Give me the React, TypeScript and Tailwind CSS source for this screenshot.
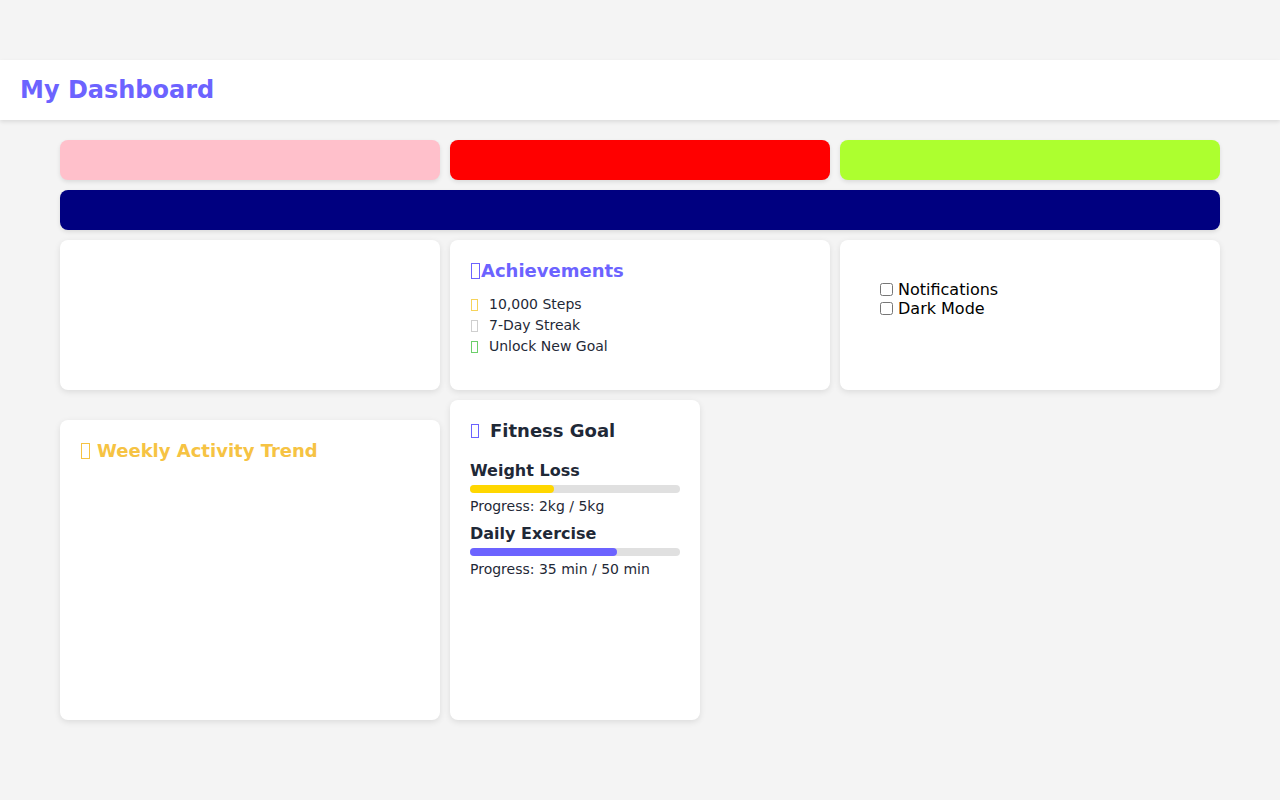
// Missing-glyph boxes, as the reference shows them
function Tofu({ className }: { className: string }) {
  return <span className={`inline-block align-middle border box-border ${className}`}></span>
}

export default function App() {
  const font = { fontFamily: '"DejaVu Sans", sans-serif' }

  return (
    <div className="min-h-[800px] bg-[#f4f4f4] pt-[60px]" style={font}>
      {/* Header */}
      <header className="bg-white h-[60px] px-5 flex items-center shadow-[0_2px_4px_rgba(0,0,0,0.1)]">
        <h1 className="text-2xl font-bold text-[#6c63ff]">My Dashboard</h1>
      </header>

      <main className="px-[60px] pt-5 flex flex-col gap-[10px]">
        {/* Colour strips */}
        <div className="grid grid-cols-3 gap-[10px]">
          <div className="h-10 rounded-lg bg-[#ffc0cb] shadow-[0_2px_4px_rgba(0,0,0,0.1)]"></div>
          <div className="h-10 rounded-lg bg-[#ff0000] shadow-[0_2px_4px_rgba(0,0,0,0.1)]"></div>
          <div className="h-10 rounded-lg bg-[#adff2f] shadow-[0_2px_4px_rgba(0,0,0,0.1)]"></div>
        </div>
        <div className="h-10 rounded-lg bg-[#000080] shadow-[0_2px_4px_rgba(0,0,0,0.1)]"></div>

        {/* Cards row */}
        <div className="grid grid-cols-3 gap-[10px]">
          <div className="h-[150px] rounded-lg bg-white shadow-[0_2px_6px_rgba(0,0,0,0.1)]"></div>

          <div className="h-[150px] rounded-lg bg-white p-5 shadow-[0_2px_6px_rgba(0,0,0,0.1)]">
            <h3 className="flex items-center text-lg font-bold text-[#6c63ff] leading-[22px]">
              <Tofu className="ml-px mr-px w-[9px] h-4 border-[#6c63ff]" />
              <span>Achievements</span>
            </h3>
            <ul className="mt-3 text-sm text-[#1f2937] leading-[21px]">
              <li className="flex items-center">
                <Tofu className="ml-px mr-[11px] w-[7px] h-3 border-[#f6d35a]" />10,000 Steps
              </li>
              <li className="flex items-center">
                <Tofu className="ml-px mr-[11px] w-[7px] h-3 border-[#cfcfcf]" />7-Day Streak
              </li>
              <li className="flex items-center">
                <Tofu className="ml-px mr-[11px] w-[7px] h-3 border-[#6ccf6a]" />Unlock New Goal
              </li>
            </ul>
          </div>

          <div className="h-[150px] rounded-lg bg-white pt-10 pl-9 text-base text-black leading-[19px] shadow-[0_2px_6px_rgba(0,0,0,0.1)]">
            <label className="flex items-center">
              <input type="checkbox" className="m-[3px] ml-1 w-[13px] h-[13px]" />
              <span className="ml-[2px]">Notifications</span>
            </label>
            <label className="flex items-center">
              <input type="checkbox" className="m-[3px] ml-1 w-[13px] h-[13px]" />
              <span className="ml-[2px]">Dark Mode</span>
            </label>
          </div>
        </div>

        {/* Bottom row */}
        <div className="flex items-end gap-[10px]">
          <div className="w-[380px] h-[300px] rounded-lg bg-white p-5 shadow-[0_2px_6px_rgba(0,0,0,0.1)]">
            <h3 className="flex items-center text-lg font-bold text-[#f6c343] leading-[22px]">
              <Tofu className="ml-px mr-[7px] w-[9px] h-4 border-[#f6c343]" />
              <span>Weekly Activity Trend</span>
            </h3>
          </div>

          <div className="w-[250px] h-[320px] rounded-lg bg-white p-5 shadow-[0_2px_6px_rgba(0,0,0,0.1)] text-[#1f2937]">
            <h3 className="flex items-center text-lg font-bold leading-[22px]">
              <Tofu className="ml-px mr-[11px] w-2 h-[14px] border-[#6c63ff]" />
              <span>Fitness Goal</span>
            </h3>

            <div className="mt-[19px]">
              <h4 className="text-base font-bold leading-[19px]">Weight Loss</h4>
              <div className="mt-[5px] h-2 rounded bg-[#e0e0e0]">
                <div className="h-2 rounded bg-[#ffd700]" style={{ width: '40%' }}></div>
              </div>
              <p className="mt-[3px] text-sm leading-[20px]">Progress: 2kg / 5kg</p>
            </div>

            <div className="mt-[8px]">
              <h4 className="text-base font-bold leading-[19px]">Daily Exercise</h4>
              <div className="mt-[5px] h-2 rounded bg-[#e0e0e0]">
                <div className="h-2 rounded bg-[#6c63ff]" style={{ width: '70%' }}></div>
              </div>
              <p className="mt-[3px] text-sm leading-[20px]">Progress: 35 min / 50 min</p>
            </div>
          </div>
        </div>
      </main>
    </div>
  )
}
